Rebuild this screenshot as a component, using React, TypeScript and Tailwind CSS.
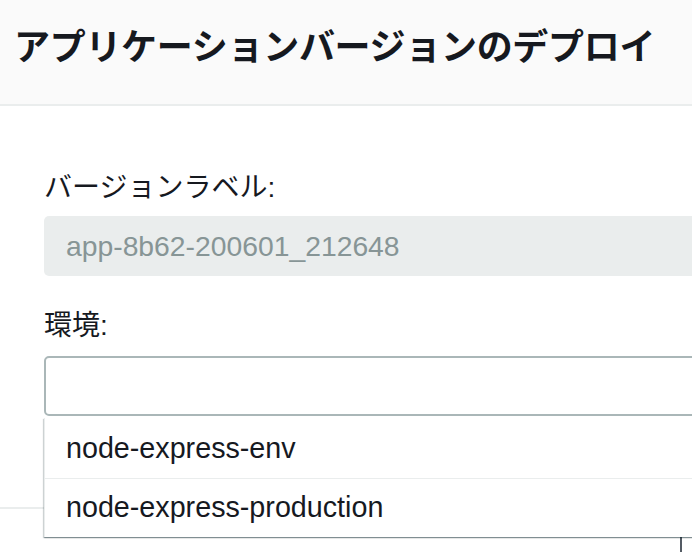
const jp = 'font-["Liberation_Sans","Noto_Sans_CJK_JP",sans-serif]';

function FieldLabel({ children, className }: { children: string; className?: string }) {
  return <div className={`text-[28px] leading-[40px] text-[#16191f] ${className ?? ''}`}>{children}</div>;
}

export default function App() {
  const envs = ['node-express-env', 'node-express-production'];

  return (
    <div className={`w-[692px] h-[552px] overflow-hidden bg-white ${jp}`}>
      <div className="w-[1000px]">
        <div className="h-[106px] bg-[#fafafa] border-b-2 border-[#eaeded] pl-[14px] pt-[26px]">
          <h1 className="text-[36px] leading-[44px] font-bold text-[#16191f] tracking-[-0.3px]">
            アプリケーションバージョンのデプロイ
          </h1>
        </div>

        <div className="pl-[44px] pt-[62px] pb-[91px]">
          <FieldLabel>バージョンラベル:</FieldLabel>
          <div className="mt-[8px] h-[60px] rounded-[5px] bg-[#eaeded] flex items-center pl-[22px] text-[28.3px] text-[#879596]">
            app-8b62-200601_212648
          </div>

          <FieldLabel className="mt-[30px]">環境:</FieldLabel>
          <div className="relative mt-[10px]">
            <div className="h-[60px] rounded-[5px] border-2 border-[#aab7b8] bg-white" />
            <ul className="absolute left-0 right-0 top-[62px] bg-white border-l border-[#eaeded] shadow-[0_1px_1px_0_rgba(0,28,36,0.3),1px_1px_1px_0_rgba(0,28,36,0.15),-1px_1px_1px_0_rgba(0,28,36,0.15)] z-10">
              {envs.map((e, i) => (
                <li
                  key={e}
                  className={`h-[59px] flex items-center pl-[21px] text-[28.7px] text-[#16191f] ${i > 0 ? 'border-t border-[#eaeded]' : 'mt-[1px]'}`}
                >
                  {e}
                </li>
              ))}
            </ul>
          </div>
        </div>

        <div className="border-t-2 border-[#eaeded] pt-[20px] pr-[40px] flex justify-end gap-[12px]">
          <button aria-label="キャンセル" className="w-[148px] h-[60px] rounded-[4px] border-2 border-[#545b64] bg-white" />
          <button aria-label="デプロイ" className="w-[120px] h-[60px] rounded-[4px] bg-[#ec7211]" />
        </div>
      </div>
    </div>
  );
}
